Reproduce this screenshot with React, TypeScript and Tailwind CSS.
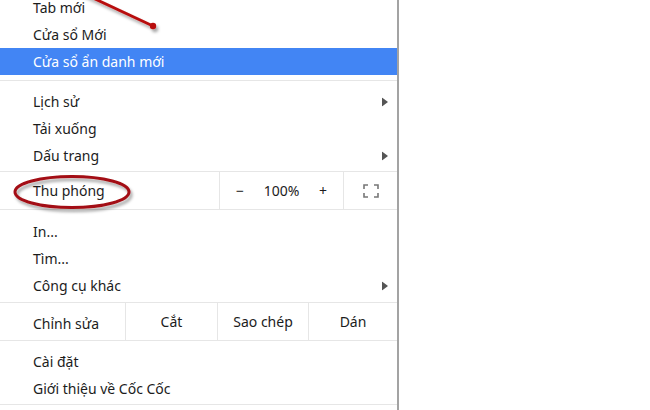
const Arrow = () => (
	<svg width="6" height="9" viewBox="0 0 6 9" className="absolute right-[9px] top-1/2 -translate-y-1/2">
		<path d="M0 0 L6 4.5 L0 9 Z" fill="#555" />
	</svg>
);

interface ItemProps {
	label: string;
	active?: boolean;
	sub?: boolean;
}

const Item = ({ label, active, sub }: ItemProps) => (
	<div
		className={`relative h-[27px] flex items-center pl-[33px] ${
			active ? 'bg-[#4285f4] text-white' : 'text-[#1c1c1c]'
		}`}
	>
		{label}
		{sub && <Arrow />}
	</div>
);

const FullscreenIcon = () => (
	<svg width="16" height="14" viewBox="0 0 16 14" fill="none" stroke="#777" strokeWidth="1.6">
		<path d="M1 5 V1 H5" />
		<path d="M11 1 H15 V5" />
		<path d="M15 9 V13 H11" />
		<path d="M5 13 H1 V9" />
	</svg>
);

export default function App() {
	return (
		<div
			className="relative w-[650px] h-[410px] overflow-hidden bg-white text-[14px]"
			style={{ fontFamily: '"Noto Sans", "Open Sans", sans-serif' }}
		>
			<div className="w-[399px] h-[420px] border-r-2 border-[#a3a3a3] -mt-[6px]">
				<Item label="Tab mới" />
				<Item label="Cửa sổ Mới" />
				<Item label="Cửa sổ ẩn danh mới" active />
				<div className="pt-[5px] pb-[7px]">
					<div className="h-px bg-[#e6e6e6]" />
				</div>
				<Item label="Lịch sử" sub />
				<Item label="Tải xuống" />
				<Item label="Dấu trang" sub />

				<div className="mt-[2px] h-[39px] flex border-y border-[#e6e6e6] text-[#1c1c1c]">
					<div className="w-[219px] flex items-center pl-[33px]">Thu phóng</div>
					<div className="w-[124px] border-l border-[#e6e6e6] flex items-center">
						<span className="w-[40px] text-center">−</span>
						<span className="flex-1 text-center">100%</span>
						<span className="w-[40px] text-center">+</span>
					</div>
					<div className="flex-1 border-l border-[#e6e6e6] flex items-center justify-center">
						<FullscreenIcon />
					</div>
				</div>

				<div className="pt-[8px]">
					<Item label="In..." />
					<Item label="Tìm..." />
					<Item label="Công cụ khác" sub />
				</div>

				<div className="mt-[3px] h-[39px] flex border-y border-[#e6e6e6] text-[#1c1c1c]">
					<div className="w-[125px] flex items-center pl-[33px] pt-[3px]">Chỉnh sửa</div>
					<div className="w-[92px] border-l border-[#e6e6e6] flex items-center justify-center">Cắt</div>
					<div className="w-[91px] border-l border-[#e6e6e6] flex items-center justify-center">Sao chép</div>
					<div className="flex-1 border-l border-[#e6e6e6] flex items-center justify-center">Dán</div>
				</div>

				<div className="pt-[7px]">
					<Item label="Cài đặt" />
					<Item label="Giới thiệu về Cốc Cốc" />
				</div>
				<div className="pt-[2px]">
					<div className="h-px bg-[#e6e6e6]" />
				</div>
			</div>

			{/* red annotations */}
			<svg className="absolute left-0 top-0 pointer-events-none" width="650" height="410">
				<defs>
					<filter id="sh" x="-20%" y="-50%" width="140%" height="200%">
						<feDropShadow dx="2" dy="3" stdDeviation="1.5" floodColor="#000" floodOpacity="0.35" />
					</filter>
				</defs>
				<g filter="url(#sh)">
					<line x1="80" y1="-8" x2="153" y2="26" stroke="#b80d0d" strokeWidth="3" strokeLinecap="round" />
					<circle cx="153" cy="26" r="3.2" fill="#b80d0d" />
				</g>
				<ellipse
					cx="72"
					cy="192"
					rx="57"
					ry="15.5"
					fill="none"
					stroke="#a30f12"
					strokeWidth="3"
					filter="url(#sh)"
				/>
			</svg>
		</div>
	);
}
